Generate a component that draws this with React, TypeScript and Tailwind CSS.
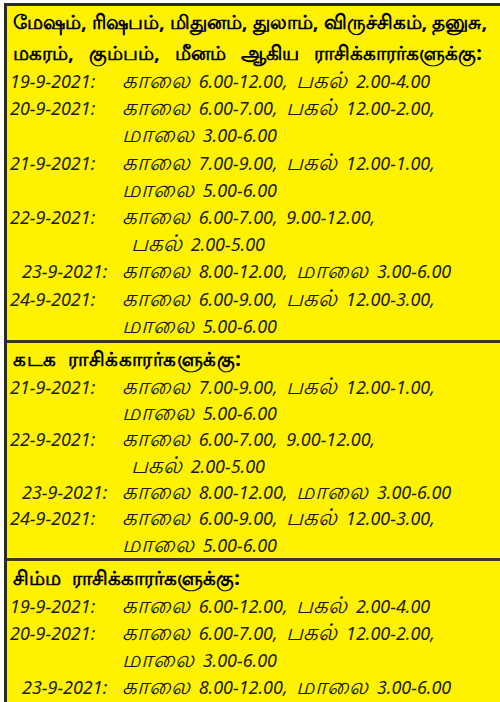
type Line = { pl: number; text: string; date?: string; dw?: number };

const sections: {
  heads: { t: string; ws: string }[];
  lines: Line[];
  pt: string;
  lh: string;
  hl: string;
}[] = [
  {
    heads: [
      { t: "மேஷம், ரிஷபம், மிதுனம், துலாம், விருச்சிகம், தனுசு,", ws: "" },
      { t: "மகரம், கும்பம், மீனம் ஆகிய ராசிக்காரர்களுக்கு:", ws: "[word-spacing:10px]" },
    ],
    pt: "pt-0",
    hl: "h-[31px] leading-[31px]",
    lh: "h-[27.2px]",
    lines: [
      { pl: 10, date: "19-9-2021:", text: "காலை 6.00-12.00, பகல் 2.00-4.00" },
      { pl: 10, date: "20-9-2021:", text: "காலை 6.00-7.00, பகல் 12.00-2.00," },
      { pl: 122, text: "மாலை 3.00-6.00" },
      { pl: 10, date: "21-9-2021:", text: "காலை 7.00-9.00, பகல் 12.00-1.00," },
      { pl: 122, text: "மாலை 5.00-6.00" },
      { pl: 10, date: "22-9-2021:", text: "காலை 6.00-7.00, 9.00-12.00," },
      { pl: 131, text: "பகல் 2.00-5.00" },
      { pl: 22, dw: 100, date: "23-9-2021:", text: "காலை 8.00-12.00, மாலை 3.00-6.00" },
      { pl: 10, date: "24-9-2021:", text: "காலை 6.00-9.00, பகல் 12.00-3.00," },
      { pl: 122, text: "மாலை 5.00-6.00" },
    ],
  },
  {
    heads: [{ t: "கடக ராசிக்காரர்களுக்கு:", ws: "tracking-[0.5px] [word-spacing:6px]" }],
    pt: "pt-0",
    hl: "h-[31px] leading-[31px]",
    lh: "h-[26.3px]",
    lines: [
      { pl: 10, date: "21-9-2021:", text: "காலை 7.00-9.00, பகல் 12.00-1.00," },
      { pl: 122, text: "மாலை 5.00-6.00" },
      { pl: 10, date: "22-9-2021:", text: "காலை 6.00-7.00, 9.00-12.00," },
      { pl: 131, text: "பகல் 2.00-5.00" },
      { pl: 22, dw: 100, date: "23-9-2021:", text: "காலை 8.00-12.00, மாலை 3.00-6.00" },
      { pl: 10, date: "24-9-2021:", text: "காலை 6.00-9.00, பகல் 12.00-3.00," },
      { pl: 122, text: "மாலை 5.00-6.00" },
    ],
  },
  {
    heads: [{ t: "சிம்ம ராசிக்காரர்களுக்கு:", ws: "[word-spacing:6px]" }],
    pt: "pt-[1px]",
    hl: "h-[31px] leading-[31px]",
    lh: "h-[27px]",
    lines: [
      { pl: 10, date: "19-9-2021:", text: "காலை 6.00-12.00, பகல் 2.00-4.00" },
      { pl: 10, date: "20-9-2021:", text: "காலை 6.00-7.00, பகல் 12.00-2.00," },
      { pl: 122, text: "மாலை 3.00-6.00" },
      { pl: 22, dw: 100, date: "23-9-2021:", text: "காலை 8.00-12.00, மாலை 3.00-6.00" },
    ],
  },
];

// Tamil words are set larger than the digits, as in the print
function Runs({ text }: { text: string }) {
  const parts = text.split(/([\u0B80-\u0BFF]+)/);
  return (
    <>
      {parts.map((p, i) =>
        /[\u0B80-\u0BFF]/.test(p) ? (
          <span key={i} className="text-[23px] leading-none">
            {p}
          </span>
        ) : (
          <span key={i}>{p}</span>
        )
      )}
    </>
  );
}

export default function App() {
  return (
    <div className="w-[500px] h-[702px] overflow-hidden bg-white pl-[4px] pt-[3px]">
      <div
        className="h-full bg-[#fff200] border-l-[3px] border-t-[3px] border-[#2b2b20] text-[#111]"
        style={{ fontFamily: '"Noto Sans", "Liberation Sans", sans-serif' }}
      >
        {sections.map((s, i) => (
          <div key={i} className={i > 0 ? "border-t-[3px] border-[#3a3a1a]" : ""}>
            <div className={s.pt}>
              {s.heads.map((h) => (
                <div
                  key={h.t}
                  className={`pl-[6px] text-[20px] font-bold whitespace-nowrap text-black ${s.hl} ${h.ws}`}
                >
                  {h.t}
                </div>
              ))}
            </div>
            <div>
              {s.lines.map((l, j) => (
                <div
                  key={j}
                  className={`text-[18px] italic leading-[26px] whitespace-nowrap text-[#1c1c08] [word-spacing:4px] ${s.lh}`}
                  style={{ paddingLeft: l.pl - 7 }}
                >
                  {l.date && (
                    <span className="inline-block [word-spacing:0]" style={{ width: l.dw ?? 112 }}>
                      {l.date}
                    </span>
                  )}
                  <Runs text={l.text} />
                </div>
              ))}
            </div>
          </div>
        ))}
      </div>
    </div>
  );
}
